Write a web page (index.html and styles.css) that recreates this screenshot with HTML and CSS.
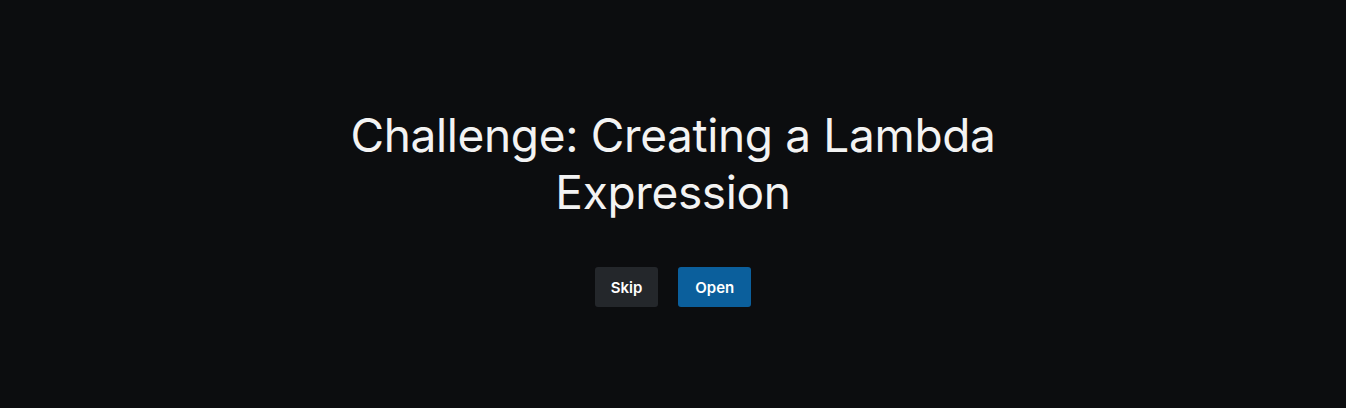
FILE: index.html
```html
<!DOCTYPE html>
<html>
<head>
<meta charset="utf-8">
<link rel="stylesheet" href="styles.css">
</head>
<body>
<main class="page">
  <h1 class="title">Challenge: Creating a Lambda Expression</h1>
  <div class="actions">
    <button class="btn btn-skip">Skip</button>
    <button class="btn btn-open">Open</button>
  </div>
</main>
</body>
</html>
```
FILE: styles.css
```css
html, body {
  margin: 0;
  padding: 0;
  background: #0c0d0f;
  height: 100%;
}
.page {
  height: 408px;
  display: flex;
  flex-direction: column;
  align-items: center;
  justify-content: center;
  font-family: Inter, "Noto Sans", sans-serif;
  padding-top: 6px;
  box-sizing: border-box;
}
.title {
  margin: 0;
  max-width: 680px;
  text-align: center;
  color: #f3f3f3;
  font-size: 46px;
  font-weight: 400;
  line-height: 57px;
  letter-spacing: -0.35px;
}
.actions {
  display: flex;
  gap: 20px;
  margin-top: 46px;
}
.btn {
  height: 40px;
  border: none;
  border-radius: 3px;
  color: #ffffff;
  font-family: Inter, "Noto Sans", sans-serif;
  font-size: 15px;
  font-weight: 600;
  padding: 0 16px;
  cursor: pointer;
}
.btn-skip {
  background: #24272b;
}
.btn-open {
  background: #0b5f9c;
  padding: 0 17px;
}
```
